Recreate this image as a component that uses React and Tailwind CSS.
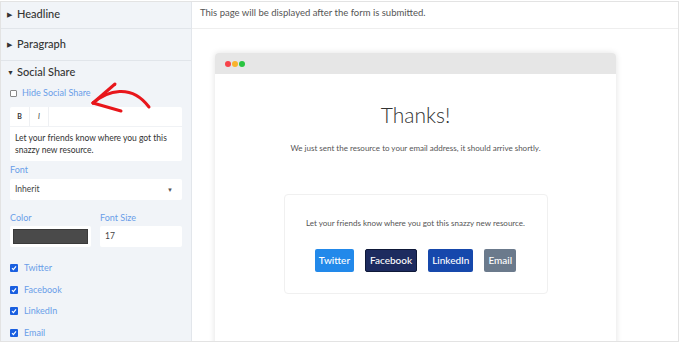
import React from 'react'

const font = { fontFamily: 'Lato, "Noto Sans", sans-serif' }

const Caret = ({ open }) => (
  <span className="inline-block text-[7px] text-[#333] w-[10px]">
    {open ? '▼' : '▶'}
  </span>
)

const Check = ({ label }) => (
  <div className="flex items-center gap-[6px] h-[21.7px] shrink-0">
    <span className="w-[8px] h-[8px] rounded-[1px] bg-[#1a5fe0] flex items-center justify-center">
      <svg width="6" height="6" viewBox="0 0 6 6">
        <path d="M1 3.2 L2.4 4.6 L5 1.4" stroke="white" strokeWidth="1.2" fill="none" />
      </svg>
    </span>
    <span className="text-[9px] text-[#6a9ee8]">{label}</span>
  </div>
)

const Sidebar = () => (
  <div className="w-[191px] shrink-0 bg-[#f1f4f8] border-r border-[#e2e6eb] flex flex-col text-[#333]">
    <div className="h-[27px] shrink-0 flex items-center px-[6px] pb-[2px] border-b border-[#e1e5ea]">
      <Caret />
      <span className="text-[11px] font-medium">Headline</span>
    </div>
    <div className="h-[32px] shrink-0 flex items-center px-[6px] pb-[1px] border-b border-[#e1e5ea]">
      <Caret />
      <span className="text-[11px] font-medium">Paragraph</span>
    </div>
    <div className="px-[9px] pt-[4px] relative shrink-0">
      <div className="flex items-center -ml-[3px] h-[14px]">
        <Caret open />
        <span className="text-[11px] font-medium">Social Share</span>
      </div>
      <div className="flex items-center gap-[5px] mt-[8px] h-[12px]">
        <span className="w-[7px] h-[7px] border border-[#888] rounded-[1px] bg-white" />
        <span className="text-[9px] text-[#6a9ee8]">Hide Social Share</span>
      </div>
      <svg className="absolute left-[80px] top-[8px]" width="78" height="48" viewBox="0 0 78 48">
        <path d="M12 34 C 26 22, 50 14, 68 38" stroke="#e8161b" strokeWidth="3" fill="none" strokeLinecap="round" />
        <path d="M12 34 L 34 15" stroke="#e8161b" strokeWidth="3" fill="none" strokeLinecap="round" />
        <path d="M12 34 L 40 42" stroke="#e8161b" strokeWidth="3" fill="none" strokeLinecap="round" />
      </svg>
      <div className="mt-[8px] bg-white rounded-[2px]">
        <div className="h-[20px] flex items-center border-b border-[#f0f2f5]">
          <span className="w-[20px] h-full flex items-center justify-center text-[7px] font-bold border-r border-[#eef0f3]">B</span>
          <span className="w-[19px] h-full flex items-center justify-center text-[7px] italic border-r border-[#eef0f3]">I</span>
        </div>
        <div className="px-[5px] pt-[5px] pb-[5px] text-[8.5px] leading-[12px] text-[#333]">
          Let your friends know where you got this snazzy new resource.
        </div>
      </div>
      <div className="text-[9px] text-[#6a9ee8] mt-[2px] h-[13px]">Font</div>
      <div className="mt-[3px] bg-white h-[21px] flex items-center justify-between px-[5px] rounded-[2px]">
        <span className="text-[8.5px] text-[#444]">Inherit</span>
        <span className="text-[6px] text-[#555] mr-[4px]">▼</span>
      </div>
      <div className="flex gap-[9px] mt-[11px]">
        <div className="w-[81px]">
          <div className="text-[9px] text-[#6a9ee8] h-[12px]">Color</div>
          <div className="mt-[3px] bg-white h-[21px] rounded-[2px] p-[3px]">
            <div className="h-full bg-[#4a4a4a] border border-[#3a3a3a]" />
          </div>
        </div>
        <div className="w-[82px]">
          <div className="text-[9px] text-[#6a9ee8] h-[12px]">Font Size</div>
          <div className="mt-[3px] bg-white h-[21px] rounded-[2px] flex items-center px-[5px] text-[8.5px] text-[#444]">17</div>
        </div>
      </div>
      <div className="mt-[10px] flex flex-col">
        <Check label="Twitter" />
        <Check label="Facebook" />
        <Check label="LinkedIn" />
        <Check label="Email" />
      </div>
    </div>
  </div>
)

const Btn = ({ label, cls }) => (
  <span className={`h-[23px] px-[4px] flex items-center rounded-[2px] text-white text-[10px] font-medium ${cls}`}>{label}</span>
)

const Preview = () => (
  <div className="flex-1 flex flex-col bg-white">
    <div className="h-[27px] shrink-0 border-b border-[#eeeeee] flex items-center pb-[4px] px-[8px] text-[9.5px] text-[#555]">
      This page will be displayed after the form is submitted.
    </div>
    <div className="flex-1 pl-[23px] pt-[24px] overflow-hidden">
      <div className="w-[401px] h-[320px] rounded-t-[4px] shadow-[0_0_6px_rgba(0,0,0,0.12)] bg-white">
        <div className="h-[21px] bg-[#e6e6e6] rounded-t-[4px] flex items-center gap-[1px] px-[10px]">
          <span className="w-[6px] h-[6px] rounded-full bg-[#f7434a]" />
          <span className="w-[6px] h-[6px] rounded-full bg-[#f9b32d]" />
          <span className="w-[6px] h-[6px] rounded-full bg-[#29c440]" />
        </div>
        <div className="flex flex-col items-center">
          <div className="mt-[28px] text-[21px] font-light text-[#333] leading-[26px]">Thanks!</div>
          <div className="mt-[14px] text-[8px] text-[#555]">
            We just sent the resource to your email address, it should arrive shortly.
          </div>
          <div className="mt-[40px] w-[264px] h-[100px] border border-[#f0f0f0] rounded-[4px] flex flex-col items-center">
            <div className="mt-[22px] text-[8px] text-[#555]">
              Let your friends know where you got this snazzy new resource.
            </div>
            <div className="mt-[20px] flex gap-[11px]">
              <Btn label="Twitter" cls="bg-[#2289ea]" />
              <Btn label="Facebook" cls="bg-[#1d2b5f] border border-[#0e1838]" />
              <Btn label="LinkedIn" cls="bg-[#1648ac]" />
              <Btn label="Email" cls="bg-[#6b7a8c]" />
            </div>
          </div>
        </div>
      </div>
    </div>
  </div>
)

export default function App() {
  return (
    <div className="w-[680px] h-[342px] bg-white overflow-hidden" style={font}>
      <div className="w-[679px] h-[341px] mt-[1px] border border-[#e3e3e3] flex overflow-hidden">
        <Sidebar />
        <Preview />
      </div>
    </div>
  )
}
